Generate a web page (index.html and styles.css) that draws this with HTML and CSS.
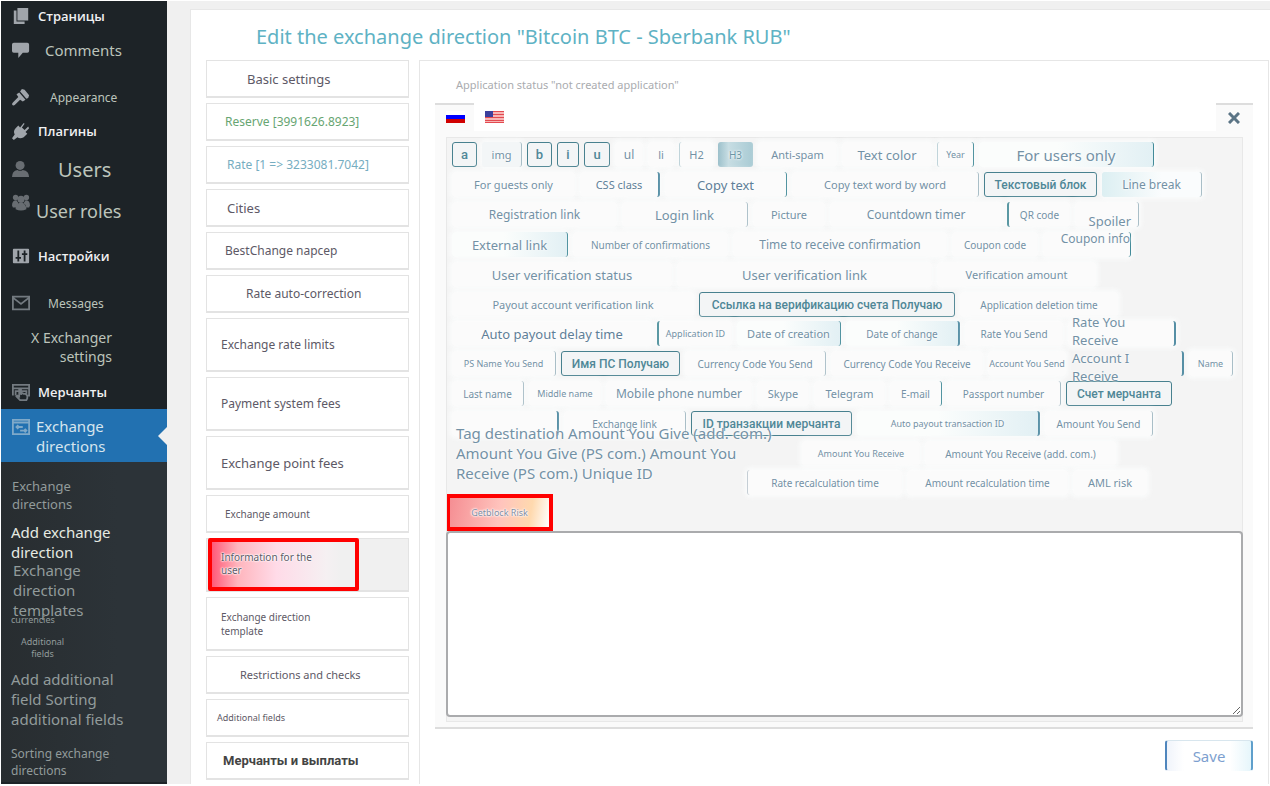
FILE: index.html
```html
<!DOCTYPE html>
<html lang="en">
<head>
<meta charset="utf-8">
<title>Edit the exchange direction</title>
<link rel="stylesheet" href="styles.css">
</head>
<body>
<div class="page">
<nav class="side">
  <a class="item h29 cyr" href="#"><svg class="ico" viewBox="0 0 20 20"><path d="M6 1h12v14H6zM2 4h3v12h9v3H2z"/></svg><span>Страницы</span></a>
  <a class="item h40 t15 in7" href="#"><svg class="ico" viewBox="0 0 20 20"><path d="M2 2h15q2 0 2 2v7q0 2-2 2h-5l-5 6v-6H2q-2 0-2-2V4q0-2 2-2z"/></svg><span>Comments</span></a>
  <a class="item h34 t12 in12 gap10" href="#"><svg class="ico" viewBox="0 0 20 20"><path d="M11 1l3 1 5 6-1 3-2 1-7-8zM8 5l7 8-3 2-3-2-6 6q-2 1-3-1 0-1 1-2l6-6-2-3z"/></svg><span>Appearance</span></a>
  <a class="item h34 cyr" href="#"><svg class="ico" viewBox="0 0 20 20"><path d="M13 1l1 1-3 4 3 3 4-4 1 2-4 4 2 2-4 4q-4 2-7 0l-4 3-2-2 3-4q-2-4 1-7l3-3 2 2z"/></svg><span>Плагины</span></a>
  <a class="item h42 t20 in20 dim" href="#"><svg class="ico" viewBox="0 0 20 20"><circle cx="9" cy="6" r="5"/><path d="M0 19q0-7 6-8 3 2 6 0 7 1 7 8z"/></svg><span>Users</span></a>
  <a class="item h42 t18 in0 dim lift" href="#"><svg class="ico" viewBox="0 0 20 20"><circle cx="4" cy="5" r="3"/><circle cx="16" cy="5" r="3"/><circle cx="10" cy="7" r="4"/><path d="M0 14q0-6 5-6l2 3-3 5H1zM20 14q0-6-5-6l-2 3 3 5h3zM4 18q0-6 4-7h4q4 1 4 7-6 3-12 0z"/></svg><span>User roles</span></a>
  <a class="item h48 cyr" href="#"><svg class="ico" viewBox="0 0 20 20"><path fill-rule="evenodd" d="M2 2h16q1 0 1 1v14q0 1-1 1H2q-1 0-1-1V3q0-1 1-1zM6 4v7H4v2h2v3h2v-3h2v-2H8V4zM13 4v3h-2v2h2v7h2V9h2V7h-2V4z"/></svg><span>Настройки</span></a>
  <a class="item h46 t12 in10 dim" href="#"><svg class="ico line" viewBox="0 0 20 20"><path d="M1 3h18v14H1zM1 4l9 7 9-7"/></svg><span>Messages</span></a>
  <a class="item h42 t14 right" href="#"><span>X Exchanger<br>settings</span></a>
  <a class="item h34 cyr dim gap7" href="#"><svg class="ico line" viewBox="0 0 20 20"><path d="M1 14V2h18v12h-2M1 6h18M4 14V9h12v3M9 19l-4-4 1-1 2 1V8h2v5l1-2 2 1 2 0 2 2v3l-1 2z"/></svg><span>Мерчанты</span></a>
  <a class="item active t15 in0" href="#" aria-current="page"><svg class="ico line" viewBox="0 0 20 20"><path d="M1 2h18v16H1zM1 5h18M5 10h7M7 8l-2 2 2 2M9 14h7M14 12l2 2-2 2"/></svg><span>Exchange<br>directions</span></a>
  <div class="sub">
    <a class="s-first" href="#">Exchange<br>directions</a>
    <a class="s-big s-on" href="#">Add exchange<br>direction</a>
    <a class="s-big s-tpl" href="#">Exchange<br>direction<br>templates</a>
    <a class="s-tiny" href="#">currencies</a>
    <a class="s-tiny s-mid" href="#">Additional<br>fields</a>
    <a class="s-big s-add" href="#">Add additional<br>field Sorting<br>additional fields</a>
    <a class="s-last" href="#">Sorting exchange<br>directions</a>
  </div>
</nav>
<main class="main">
<div class="card">
  <h1 class="title">Edit the exchange direction "Bitcoin BTC - Sberbank RUB"</h1>
  <div class="cols">
    <div class="tabs">
      <button class="tab t13 p40">Basic settings</button>
      <button class="tab t12 p18 green">Reserve [3991626.8923]</button>
      <button class="tab t12 p20 blue">Rate [1 =&gt; 3233081.7042]</button>
      <button class="tab t13 p20">Cities</button>
      <button class="tab t12 p18">BestChange napcep</button>
      <button class="tab t12 p38">Rate auto-correction</button>
      <button class="tab tall t12 p14">Exchange rate limits</button>
      <button class="tab tall t12 p14">Payment system fees</button>
      <button class="tab tall t13 p14">Exchange point fees</button>
      <button class="tab t10 p18">Exchange amount</button>
      <button class="tab tall t10 on"><span class="mark">Information for the<br>user</span></button>
      <button class="tab tall t10 p14">Exchange direction<br>template</button>
      <button class="tab t11 p34">Restrictions and checks</button>
      <button class="tab t9 p10">Additional fields</button>
      <button class="tab rob p16">Мерчанты и выплаты</button>
    </div>
    <section class="panel">
      <label class="status" for="text">Application status "not created application"</label>
      <div class="langs">
        <button class="lang cur" aria-label="Русский"><svg class="flag" viewBox="0 0 19 12"><path fill="#fff" d="M0 0h19v4H0z"/><path fill="#00f" d="M0 4h19v4H0z"/><path fill="#d00000" d="M0 8h19v4H0z"/></svg></button>
        <button class="lang" aria-label="English"><svg class="flag" viewBox="0 0 19 12"><path fill="#f7b5b5" d="M0 0h19v12H0z"/><path stroke="#e34a50" d="M0 .5h19M0 3.5h19M0 6.5h19M0 9.5h19M0 11.5h19"/><path fill="#3c3f9c" d="M0 0h8v6H0z"/></svg></button>
        <button class="lang cur shut" aria-label="Close"><svg class="x" viewBox="0 0 12 12"><path d="M1 1l10 10M11 1L1 11"/></svg></button>
      </div>
      <div class="editor">
        <div class="box">
          <div class="tools">
            <div class="row r1"><button class="chip boxed">a</button><button class="chip t11 edge-s haze">img</button><button class="chip boxed">b</button><button class="chip boxed">i</button><button class="chip boxed">u</button><button class="chip t12">ul</button><button class="chip t11">li</button><button class="chip t11 both">H2</button><button class="chip t10 fill">H3</button><button class="chip t11">Anti-spam</button><button class="chip t13">Text color</button><button class="chip t9 edge both">Year</button><button class="chip t15 edge glow">For users only</button></div>
            <div class="row r2"><button class="chip t11">For guests only</button><button class="chip t11 dark edge-d">CSS class</button><button class="chip t13 dark edge">Copy text</button><button class="chip t11 edge-s">Copy text word by word</button><button class="chip boxed">Текстовый блок</button><button class="chip t12 edge-s lglow">Line break</button></div>
            <div class="row r3"><button class="chip t12">Registration link</button><button class="chip t13 edge-s">Login link</button><button class="chip t11">Picture</button><button class="chip t12">Countdown timer</button><button class="chip t10 ledge">QR code</button><button class="chip t13 edge-s low">Spoiler</button></div>
            <div class="row r4"><button class="chip t13 edge glow">External link</button><button class="chip t10">Number of confirmations</button><button class="chip t12">Time to receive confirmation</button><button class="chip t10">Coupon code</button><button class="chip t12 edge high">Coupon info</button></div>
            <div class="row r5"><button class="chip t13">User verification status</button><button class="chip t13">User verification link</button><button class="chip t11">Verification amount</button></div>
            <div class="row r6"><button class="chip t11">Payout account verification link</button><button class="chip boxed">Ссылка на верификацию счета Получаю</button><button class="chip t10">Application deletion time</button></div>
            <div class="row r7"><button class="chip t13 dark">Auto payout delay time</button><button class="chip t9 ledge">Application ID</button><button class="chip t11 edge glow">Date of creation</button><button class="chip t10 edge-d glow">Date of change</button><button class="chip t10">Rate You Send</button><button class="chip t13 edge-d two up">Rate You<br>Receive</button></div>
            <div class="row r8"><button class="chip t9 edge-s">PS Name You Send</button><button class="chip boxed">Имя ПС Получаю</button><button class="chip t10 edge-s">Currency Code You Send</button><button class="chip t10">Currency Code You Receive</button><button class="chip t9">Account You Send</button><button class="chip t13 edge-d two down">Account I<br>Receive</button><button class="chip t9 edge-s">Name</button></div>
            <div class="row r9"><button class="chip t10 edge-s">Last name</button><button class="chip t9">Middle name</button><button class="chip t12">Mobile phone number</button><button class="chip t11">Skype</button><button class="chip t11">Telegram</button><button class="chip t10 edge">E-mail</button><button class="chip t10 edge-s">Passport number</button><button class="chip boxed">Счет мерчанта</button></div>
            <div class="row r10"><button class="chip edge-d tag"><span>Tag destination Amount You Give (add. com.)<br>Amount You Give (PS com.) Amount You<br>Receive (PS com.) Unique ID</span></button><button class="chip t10 edge-s">Exchange link</button><button class="chip boxed">ID транзакции мерчанта</button><button class="chip t9 edge-d glow">Auto payout transaction ID</button><button class="chip t10 edge-s">Amount You Send</button></div>
            <div class="row r11"><button class="chip t9">Amount You Receive</button><button class="chip t10">Amount You Receive (add. com.)</button></div>
            <div class="row r12"><button class="chip t10 ledge-s">Rate recalculation time</button><button class="chip t10">Amount recalculation time</button><button class="chip t11">AML risk</button></div>
            <div class="row r13"><button class="risk t9">Getblock Risk</button></div>
          </div>
          <textarea id="text" class="area"></textarea>
        </div>
      </div>
      <div class="foot"><button class="save">Save</button></div>
    </section>
  </div>
</div>
</main>
</div>
</body>
</html>
```
FILE: styles.css
```css
* { box-sizing: border-box; }
body { margin: 0; background: #fff; font-family: "Noto Sans", sans-serif; }
button { font-family: inherit; cursor: pointer; margin: 0; }
a { text-decoration: none; color: inherit; }
.page { display: flex; min-height: 100vh; padding: 1px 0 2px 1px; }

.t9 { font-size: 9px; }
.t10 { font-size: 10px; }
.t11 { font-size: 11px; }
.t12 { font-size: 12px; }
.t13 { font-size: 13px; }
.t14 { font-size: 14px; }
.t15 { font-size: 15px; }
.t18 { font-size: 18px; }
.t20 { font-size: 20px; }

/* Sidebar */
.side { flex: none; width: 166px; background: #1d2327; color: #bcc4bb; }
.item { display: flex; align-items: center; gap: 8px; padding-left: 11px; }
.h29 { height: 29px; }
.h34 { height: 34px; }
.h40 { height: 40px; }
.h42 { height: 42px; }
.h46 { height: 46px; }
.h48 { height: 48px; }
.gap7 { margin-top: 7px; }
.gap10 { margin-top: 10px; }
.in0 { gap: 6px; }
.in7 { gap: 15px; }
.in12 { gap: 20px; }
.in20 { gap: 28px; }
.in10 { gap: 18px; }
.cyr { font-family: "Open Sans", sans-serif; font-size: 13px; font-weight: 600; color: #f0f0f1; }
.ico { flex: none; width: 18px; height: 18px; fill: #a0a5ab; }
.dim .ico { fill: #686d72; }
.line, .dim .line { fill: none; stroke: #737a80; stroke-width: 2; }
.lift .ico, .active .ico { margin-bottom: 18px; }
.right { justify-content: flex-end; padding-right: 55px; text-align: right; line-height: 19px; }
.active { position: relative; height: 53px; background: #2271b1; color: #d6e5ee; line-height: 20px; }
.active .ico { stroke: #7fa9c9; }
.active::after { content: ""; position: absolute; right: 0; top: 18px; border: 9px solid transparent; border-left: 0; border-right-color: #f0f0f0; }
.sub { display: flex; flex-direction: column; align-items: flex-start; padding: 15px 10px 3px; background: linear-gradient(90deg, #282d30, #2c3338 70%); color: #929b9b; }
.s-first { font-size: 13px; line-height: 18px; padding-left: 1px; }
.s-big { font-size: 15px; line-height: 20px; }
.s-on { margin-top: 9px; color: #e6eae2; }
.s-tpl { margin-top: -2px; padding-left: 2px; }
.s-tiny { font-size: 9px; line-height: 12px; margin-top: -6px; }
.s-mid { margin-top: 10px; padding-left: 10px; text-align: center; }
.s-add { margin-top: 9px; }
.s-last { margin-top: 16px; font-size: 12px; line-height: 17px; }

/* Page card */
.main { flex: 1; min-width: 0; display: flex; padding: 8px 0 0 23px; background: #f0f0f0; }
.card { flex: 1; min-width: 0; display: flex; flex-direction: column; padding-left: 15px; border: 1px solid #e7e7e7; border-width: 1px 0 0 1px; background: #fff; }
.title { margin: 0; padding: 12px 0 8px 50px; font-size: 20px; line-height: 30px; font-weight: 400; color: #5eb2c4; }
.cols { flex: 1; display: flex; gap: 10px; }

.tabs { flex: none; width: 203px; display: flex; flex-direction: column; gap: 5px; padding-bottom: 4px; }
.tab { height: 38px; display: flex; align-items: center; padding: 0; border: 1px solid #e3e3e3; border-bottom-width: 2px; background: #fff; color: #5d5966; text-align: left; line-height: 14px; }
.tab.tall { height: 54px; }
.p10 { padding-left: 10px; }
.p14 { padding-left: 14px; }
.p16 { padding-left: 16px; }
.p18 { padding-left: 18px; }
.p20 { padding-left: 20px; }
.p34 { padding-left: 33px; }
.p38 { padding-left: 39px; }
.p40 { padding-left: 40px; }
.green { color: #67a572; }
.blue { color: #76adc1; }
.rob { font-family: Roboto, sans-serif; font-size: 13px; font-weight: 700; color: #444; }
.tab.on { background: #f0f0f0; padding-left: 1px; }
.mark { width: 151px; height: 53px; padding: 9px 0 0 9px; border: 4px solid #f00; border-radius: 2px; line-height: 13px; background: linear-gradient(90deg, #ff5a78 0, #ffb5bd 18%, #ffdbe8 45%, #f5f0f2 80%, #f0f0f0 90%); text-shadow: 0 0 1px #fff, 0 0 2px #fff, 0 0 2px #fff, 0 0 2px #fff; }

/* Editor panel */
.panel { flex: 1; min-width: 0; margin-right: 1px; padding: 14px 15px 0; border: 1px solid #e6e6e6; border-bottom: 0; }
.status { display: block; padding-left: 21px; font-size: 11px; line-height: 20px; color: #aaacaf; }
.langs { display: flex; margin-top: 8px; height: 28px; }
.lang { width: 39px; padding: 0 0 2px 11px; border: 0; border-top: 2px solid transparent; background: none; display: flex; align-items: center; }
.lang.cur { background: #fafafa; border-top-color: #ddd; }
.lang.shut { margin-left: auto; width: 37px; padding: 0 0 0 12px; }
.flag { width: 19px; height: 12px; }
.x { width: 12px; height: 12px; stroke: #5b7485; stroke-width: 3; }
.editor { padding: 6px 10px 5px 11px; background: #fafafa; border-bottom: 2px solid #ddd; }
.box { padding-bottom: 4px; border: 1px solid #e8e8e8; background: #f4f4f4; }
.tools { display: flex; flex-direction: column; gap: 5px; padding: 4px 0 6px 5px; overflow-x: clip; }
.row { position: relative; display: grid; grid-template-rows: 25px; column-gap: 5px; height: 25px; }
.row + .r7, .row + .r12 { margin-top: -1px; }
.r1 { grid-template-columns: 25px 40px 25px 22px 26px 28px 26px 34px 35px 79px 90px 37px 175px; }
.r2 { grid-template-columns: 123px 80px 122px 187px 113px 100px; }
.r3 { grid-template-columns: 165px 126px 72px 172px 63px 64px; }
.r4 { grid-template-columns: 116px 155px 214px 86px 88px; }
.r5 { grid-template-columns: 220px 255px 159px; }
.r6 { grid-template-columns: 242px 256px 158px; }
.r7 { grid-template-columns: 200px 75px 104px 114px 98px 108px; }
.r8 { grid-template-columns: 104px 119px 141px 152px 78px 113px 44px; }
.r9 { grid-template-columns: 72px 72px 146px 52px 71px 52px 114px 106px; }
.r10 { grid-template-columns: 107px 122px 161px 183px 108px; }
.r11 { grid-template-columns: 118px 191px; padding-left: 350px; }
.r12 { grid-template-columns: 155px 161px 74px; padding-left: 295px; }
.r13 { grid-template-columns: 107px; }
.chip { display: flex; align-items: center; justify-content: center; min-width: 0; padding: 0; border: 0 solid transparent; border-radius: 3px; background: rgba(253, 254, 254, .75); box-shadow: 0 0 4px 3px rgba(252, 254, 254, .7); color: #7391a5; white-space: nowrap; line-height: 18px; text-shadow: 0 0 2px #fff, 0 0 3px #fff; }
.dark { color: #5f7f98; }
.boxed { border: 1px solid #48818f; background: #f3f5f6; box-shadow: none; color: #4f8797; font-family: Roboto, sans-serif; font-size: 12px; font-weight: 500; text-shadow: none; }
.r1 .boxed { font-size: 13px; }
.edge { border-right: 1px solid #438b99; }
.edge-s { border-right: 1px solid #a9bec7; }
.edge-d { border-right: 2px solid #568fa5; }
.ledge { border-left: 2px solid #5a98a3; }
.ledge-s { border-left: 1px solid #c5ced5; }
.both { border-left: 1px solid #c0d4da; }
.haze { background: #f3f6f7; }
.fill { background: linear-gradient(90deg, #9cc0cb, #c7dde3 30%, #a9cbd4); color: #6b96a5; box-shadow: none; }
.glow { background: linear-gradient(90deg, #fbfdfc 45%, #e2f0f4); }
.lglow { background: linear-gradient(90deg, #dceff2, #fafcfd 60%); }
.low { padding-top: 13px; justify-content: flex-end; padding-right: 7px; }
.high { padding-bottom: 12px; justify-content: flex-end; }
.two { justify-content: flex-start; text-align: left; z-index: 1; }
.up { padding: 0 0 6px 4px; }
.down { padding: 6px 0 0 1px; background: none; box-shadow: none; }
.tag span { position: absolute; left: 4px; top: 12px; z-index: 1; font-size: 15px; line-height: 20px; text-align: left; }
.risk { position: relative; width: 107px; height: 37px; margin: -6px 0 0 -6px; padding: 0; border: 4px solid #f00; background: linear-gradient(100deg, #f58e93, #ffc4bd 50%, #ffd9ae 80%, #fff); color: #7f8ba0; text-shadow: 0 0 1px #fff, 0 0 2px #fff, 0 0 2px #fff, 0 0 3px #fff; }
.area { display: block; width: calc(100% + 2px); height: 186px; margin: 0 -1px; border: 2px solid #aaabad; border-radius: 4px; background: #fff; resize: both; }
.foot { display: flex; justify-content: flex-end; padding: 11px 0 12px; }
.save { width: 88px; height: 31px; padding: 0; border: 1px solid #d8e6ee; border-left: 2px solid #4f86bd; border-right: 2px solid #5f9fcb; border-bottom-color: transparent; border-radius: 3px; background: linear-gradient(90deg, #f0f4fb, #fff 20%, #fff 75%, #e6f6fb); color: #7d9fcf; font-size: 15px; }
```
